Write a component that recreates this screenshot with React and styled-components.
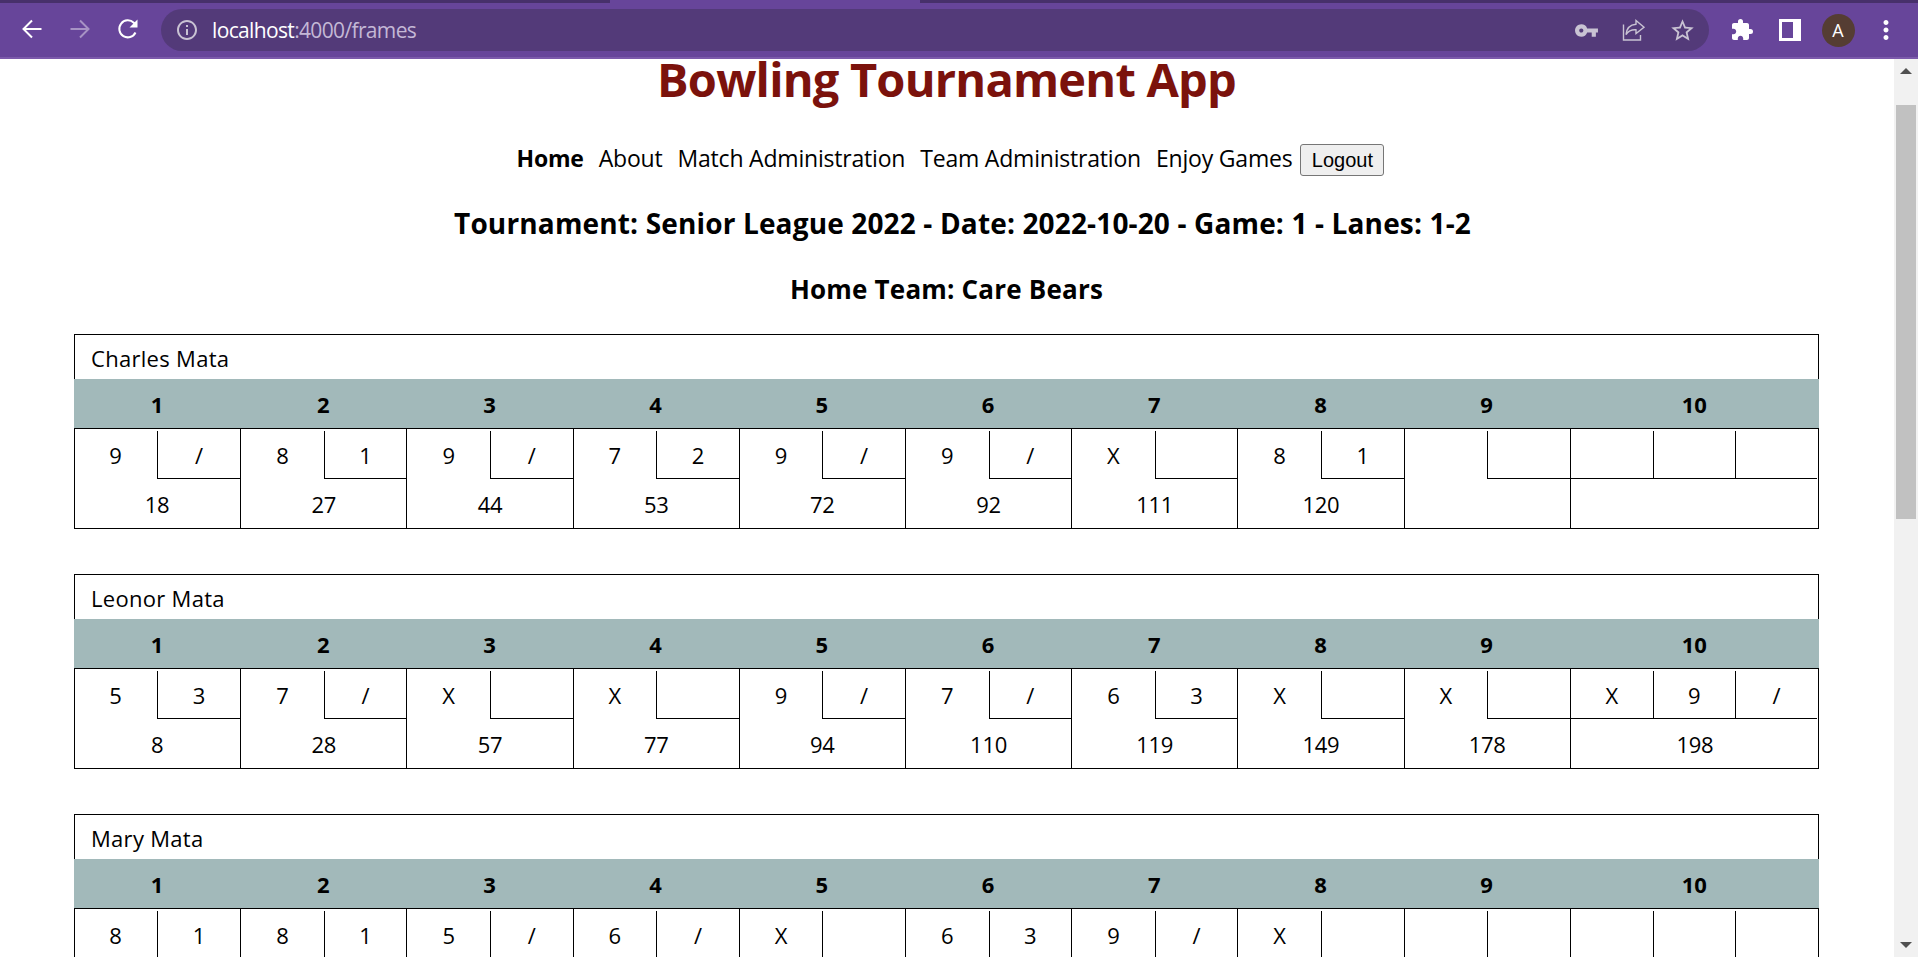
import React from "react";
import styled, { createGlobalStyle } from "styled-components";
import { MdExtension, MdInfoOutline, MdMoreVert, MdStarBorder, MdVpnKey } from "react-icons/md";

const games = [
  {
    name: "Charles Mata",
    frames: [["9", "/"], ["8", "1"], ["9", "/"], ["7", "2"], ["9", "/"], ["9", "/"], ["X", ""], ["8", "1"], ["", ""], ["", "", ""]],
    totals: ["18", "27", "44", "53", "72", "92", "111", "120", "", ""],
  },
  {
    name: "Leonor Mata",
    frames: [["5", "3"], ["7", "/"], ["X", ""], ["X", ""], ["9", "/"], ["7", "/"], ["6", "3"], ["X", ""], ["X", ""], ["X", "9", "/"]],
    totals: ["8", "28", "57", "77", "94", "110", "119", "149", "178", "198"],
  },
  {
    name: "Mary Mata",
    frames: [["8", "1"], ["8", "1"], ["5", "/"], ["6", "/"], ["X", ""], ["6", "3"], ["9", "/"], ["X", ""], ["", ""], ["", "", ""]],
    totals: ["", "", "", "", "", "", "", "", "", ""],
  },
];

const App = () => {
  return (
    <Window>
      <GlobalStyle />
      <TabStrip>
        <TabEdge $width={610} />
        <TabEdge $grow />
      </TabStrip>
      <Toolbar>
        <NavButton $lift>
          <svg width="24" height="24" viewBox="0 0 24 24" fill="none" stroke="#fff" strokeWidth="2">
            <path d="M21.5 12H3.5M12 3.5L3.5 12l8.5 8.5" />
          </svg>
        </NavButton>
        <NavButton $lift $dim>
          <svg width="24" height="24" viewBox="0 0 24 24" fill="none" stroke="#fff" strokeWidth="2">
            <path d="M2.5 12h18M12 3.5l8.5 8.5-8.5 8.5" />
          </svg>
        </NavButton>
        <NavButton $lift>
          <svg width="24" height="24" viewBox="0 0 24 24" fill="none">
            <path d="M19.5 15.5A8.5 8.5 0 1 1 17.8 5.8L20 8" stroke="#fff" strokeWidth="2" />
            <path d="M21.5 2.500v8h-8z" fill="#fff" />
          </svg>
        </NavButton>
        <Omnibox>
          <InfoIcon>
            <MdInfoOutline size={24} />
          </InfoIcon>
          <Address>
            localhost<AddressRest>:4000/frames</AddressRest>
          </Address>
          <OmniAction>
            <MdVpnKey size={25} />
          </OmniAction>
          <OmniAction>
            <svg width="24" height="24" viewBox="0 0 24 24" fill="none" stroke="currentColor" strokeWidth="1.4">
              <path d="M1.500 6.500v15.500h17v-5" />
              <path d="M14 2.500l8 6.700-8 6.300v-3.700c-4.500-.3-7.500 1-10 4.700.6-6 4-9.800 10-10.300z" />
            </svg>
          </OmniAction>
          <OmniAction>
            <MdStarBorder size={27} />
          </OmniAction>
        </Omnibox>
        <NavButton>
          <MdExtension size={24} color="#fff" />
        </NavButton>
        <NavButton>
          <SidePanelIcon />
        </NavButton>
        <NavButton>
          <Avatar>A</Avatar>
        </NavButton>
        <NavButton>
          <MdMoreVert size={30} color="#fff" />
        </NavButton>
      </Toolbar>
      <Viewport>
        <Page>
          <Title>Bowling Tournament App</Title>
          <Nav>
            <NavLink $active>Home</NavLink>
            <NavLink>About</NavLink>
            <NavLink>Match Administration</NavLink>
            <NavLink>Team Administration</NavLink>
            <NavLink>Enjoy Games</NavLink>
            <LogoutButton>Logout</LogoutButton>
          </Nav>
          <Subtitle>Tournament: Senior League 2022 - Date: 2022-10-20 - Game: 1 - Lanes: 1-2</Subtitle>
          <TeamTitle>Home Team: Care Bears</TeamTitle>
          <Games>
            {games.map((game) => (
              <ScoreCard key={game.name}>
                <PlayerName>{game.name}</PlayerName>
                <HeaderRow>
                  {game.frames.map((_, i) => (
                    <HeaderCell key={i}>{i + 1}</HeaderCell>
                  ))}
                </HeaderRow>
                <FrameRow>
                  {game.frames.map((balls, i) => (
                    <Frame key={i} $first={i === 0}>
                      <Balls $count={balls.length}>
                        {balls.map((ball, j) => (
                          <Ball key={j} $boxed={j > 0} $tenth={balls.length === 3}>
                            {ball}
                          </Ball>
                        ))}
                      </Balls>
                      <Total>{game.totals[i]}</Total>
                    </Frame>
                  ))}
                </FrameRow>
              </ScoreCard>
            ))}
          </Games>
        </Page>
        <Scrollbar>
          <ScrollArrow $up />
          <ScrollTrack>
            <ScrollThumb />
          </ScrollTrack>
          <ScrollArrow />
        </Scrollbar>
      </Viewport>
    </Window>
  );
};

const SidePanelIcon = () => (
  <svg width="22" height="22" viewBox="0 0 22 22">
    <path fillRule="evenodd" d="M0 0h22v22H0zM3 3v16h11V3z" fill="#fff" />
  </svg>
);

const GlobalStyle = createGlobalStyle`
  html,
  body {
    margin: 0;
    height: 100%;
    overflow: hidden;
    background: #fff;
  }

  * {
    box-sizing: border-box;
  }
`;

const Window = styled.div`
  height: 957px;
  display: flex;
  flex-direction: column;
  font-family: "Open Sans", "Noto Sans", sans-serif;
  color: #000;
`;

const TabStrip = styled.div`
  height: 9px;
  flex: none;
  display: flex;
  gap: 310px;
  background: #67459a;
`;

const TabEdge = styled.div`
  height: 3px;
  width: ${(p) => (p.$width ? `${p.$width}px` : "auto")};
  flex: ${(p) => (p.$grow ? 1 : "none")};
  background: #47306b;
`;

const Toolbar = styled.header`
  height: 50px;
  flex: none;
  padding: 0 8px 6px;
  display: flex;
  align-items: center;
  background: #67459a;
  border-bottom: 2px solid #7c5aab;
`;

const NavButton = styled.div`
  width: 48px;
  height: 42px;
  padding-bottom: ${(p) => (p.$lift ? "2px" : 0)};
  flex: none;
  display: flex;
  align-items: center;
  justify-content: center;
  opacity: ${(p) => (p.$dim ? 0.42 : 1)};
`;

const Omnibox = styled.div`
  flex: 1;
  height: 42px;
  margin: 0 9px;
  padding: 0 3px 0 14px;
  display: flex;
  align-items: center;
  border-radius: 21px;
  background: #533a79;
`;

const InfoIcon = styled.div`
  display: flex;
  color: #c9c3d3;
`;

const Address = styled.div`
  flex: 1;
  margin-left: 13px;
  font-size: 21px;
  letter-spacing: -0.65px;
  color: #fff;
`;

const AddressRest = styled.span`
  color: #c4b8d6;
`;

const OmniAction = styled.div`
  width: 48px;
  display: flex;
  justify-content: center;
  color: #c9c3d3;
`;

const Avatar = styled.div`
  width: 33px;
  height: 33px;
  display: flex;
  align-items: center;
  justify-content: center;
  border-radius: 50%;
  background: #553d33;
  color: #fff;
  font-size: 18px;
`;

const Viewport = styled.div`
  flex: 1;
  min-height: 0;
  display: flex;
`;

const Page = styled.main`
  flex: 1;
  min-width: 0;
  padding: 0 75px 0 74px;
  display: flex;
  flex-direction: column;
`;

const Title = styled.h1`
  margin: 0;
  line-height: 40px;
  font-size: 47px;
  font-weight: 700;
  letter-spacing: -0.8px;
  text-align: center;
  color: #7b120c;
`;

const Nav = styled.nav`
  margin-top: 45px;
  padding-left: 8px;
  height: 32px;
  flex: none;
  display: flex;
  justify-content: center;
  align-items: center;
  gap: 15px;
`;

const NavLink = styled.a`
  margin-bottom: 5px;
  font-size: 23px;
  font-weight: ${(p) => (p.$active ? 700 : 400)};
  letter-spacing: -0.2px;
  color: #000;
`;

const LogoutButton = styled.button`
  width: 84px;
  height: 32px;
  margin-left: -7px;
  padding: 0;
  font-family: "Liberation Sans", Arial, sans-serif;
  font-size: 20px;
  color: #000;
  background: #efefef;
  border: 1px solid #767676;
  border-radius: 3px;
`;

const Subtitle = styled.h2`
  margin: 30px 0 0;
  padding-left: 32px;
  line-height: 34px;
  font-size: 28px;
  font-weight: 700;
  letter-spacing: 0.15px;
  text-align: center;
`;

const TeamTitle = styled(Subtitle)`
  margin-top: 32px;
  padding-left: 0;
  font-size: 26px;
  letter-spacing: 0.2px;
`;

const Games = styled.div`
  margin-top: 28px;
  flex: 1;
  min-height: 0;
  overflow: hidden;
  display: flex;
  flex-direction: column;
  gap: 45px;
`;

const ScoreCard = styled.section`
  flex: none;
  border: 1px solid #000;
`;

const PlayerName = styled.div`
  height: 44px;
  padding: 1px 0 0 16px;
  display: flex;
  align-items: center;
  font-size: 22px;
  letter-spacing: 0.3px;
`;

const frameColumns = "repeat(9, 2fr) 3fr";

const HeaderRow = styled.div`
  height: 50px;
  margin: 0 -1px;
  display: grid;
  grid-template-columns: ${frameColumns};
  background: #a2b9ba;
  border-bottom: 1px solid #000;
`;

const HeaderCell = styled.div`
  display: flex;
  align-items: center;
  justify-content: center;
  font-size: 22px;
  font-weight: 700;
`;

const FrameRow = styled.div`
  margin: 0 -1px;
  display: grid;
  grid-template-columns: ${frameColumns};
`;

const Frame = styled.div`
  min-width: 0;
  border-left: ${(p) => (p.$first ? "none" : "1px solid #000")};
`;

const Balls = styled.div`
  height: 50px;
  padding-right: ${(p) => (p.$count === 3 ? "2px" : 0)};
  display: grid;
  grid-template-columns: repeat(${(p) => p.$count}, 1fr);
`;

const Ball = styled.div`
  margin-top: ${(p) => (p.$boxed ? "2px" : 0)};
  padding-top: ${(p) => (p.$boxed ? 0 : "2px")};
  display: flex;
  align-items: center;
  justify-content: center;
  font-size: 22px;
  border-left: ${(p) => (p.$boxed ? "1px solid #000" : "none")};
  border-bottom: ${(p) => (p.$boxed || p.$tenth ? "1px solid #000" : "none")};
`;

const Total = styled.div`
  height: 49px;
  display: flex;
  align-items: center;
  justify-content: center;
  font-size: 22px;
  letter-spacing: -0.3px;
`;

const Scrollbar = styled.aside`
  width: 24px;
  flex: none;
  display: flex;
  flex-direction: column;
  background: #f1f1f1;
`;

const ScrollArrow = styled.div`
  height: 24px;
  flex: none;
  display: flex;
  align-items: center;
  justify-content: center;

  &::before {
    content: "";
    border-left: 6px solid transparent;
    border-right: 6px solid transparent;
    ${(p) => (p.$up ? "border-bottom: 6px solid #505050;" : "border-top: 6px solid #505050;")}
  }
`;

const ScrollTrack = styled.div`
  flex: 1;
  padding: 22px 2px 0;
`;

const ScrollThumb = styled.div`
  height: 414px;
  background: #c1c1c1;
`;

export default App;
